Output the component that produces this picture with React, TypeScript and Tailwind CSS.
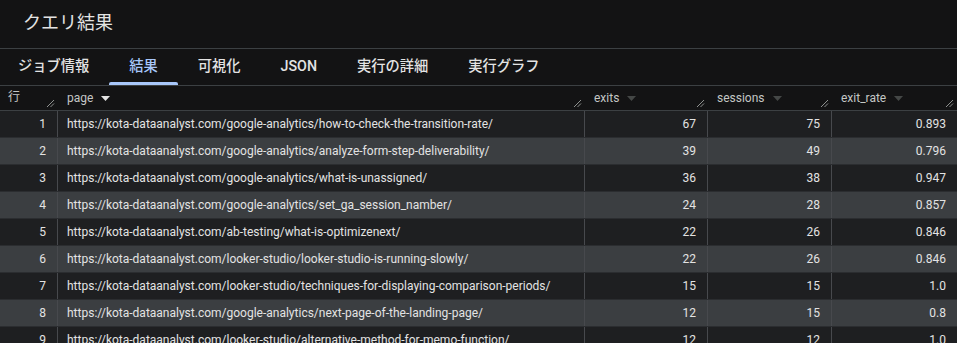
import React from "react";

const rows: [number, string, number, number, string][] = [
  [1, "https://kota-dataanalyst.com/google-analytics/how-to-check-the-transition-rate/", 67, 75, "0.893"],
  [2, "https://kota-dataanalyst.com/google-analytics/analyze-form-step-deliverability/", 39, 49, "0.796"],
  [3, "https://kota-dataanalyst.com/google-analytics/what-is-unassigned/", 36, 38, "0.947"],
  [4, "https://kota-dataanalyst.com/google-analytics/set_ga_session_namber/", 24, 28, "0.857"],
  [5, "https://kota-dataanalyst.com/ab-testing/what-is-optimizenext/", 22, 26, "0.846"],
  [6, "https://kota-dataanalyst.com/looker-studio/looker-studio-is-running-slowly/", 22, 26, "0.846"],
  [7, "https://kota-dataanalyst.com/looker-studio/techniques-for-displaying-comparison-periods/", 15, 15, "1.0"],
  [8, "https://kota-dataanalyst.com/google-analytics/next-page-of-the-landing-page/", 12, 15, "0.8"],
  [9, "https://kota-dataanalyst.com/looker-studio/alternative-method-for-memo-function/", 12, 12, "1.0"],
];

const tabs = ["ジョブ情報", "結果", "可視化", "JSON", "実行の詳細", "実行グラフ"];

function Handle() {
  return (
    <svg width="9" height="9" viewBox="0 0 9 9" className="absolute right-[3px] bottom-[2px]">
      <line x1="1" y1="8" x2="8" y2="1" stroke="#8e918f" strokeWidth="1" />
      <line x1="4.5" y1="8" x2="8" y2="4.5" stroke="#8e918f" strokeWidth="1" />
    </svg>
  );
}

function Arrow({ bright }: { bright?: boolean }) {
  return (
    <svg width="9" height="5" viewBox="0 0 9 5" className="ml-[8px] mt-[1px]">
      <path d="M0 0 L9 0 L4.5 5 Z" fill={bright ? "#e3e3e3" : "#444746"} />
    </svg>
  );
}

export default function App() {
  const font = { fontFamily: "Roboto, 'Noto Sans CJK JP', sans-serif" };
  return (
    <div className="w-[957px] h-[343px] overflow-hidden bg-[#131314] text-[#e3e3e3]" style={font}>
      <div className="h-[49px] border-b border-[#3c4043] flex items-center pl-[23px] pb-[5px]">
        <span className="text-[18px] text-[#e3e3e3]" style={{ fontFamily: "'Noto Sans CJK JP', Roboto, sans-serif" }}>クエリ結果</span>
      </div>
      <div className="h-[37px] border-b border-[#3c4043] flex ml-[-2px]">
        {tabs.map((t, i) => (
          <div
            key={t}
            className={
              "relative h-full flex items-center px-[20px] text-[14.25px] font-medium " +
              (i === 1 ? "text-[#a8c7fa]" : "text-[#e3e3e3]")
            }
            style={{ fontFamily: "Roboto, 'Noto Sans CJK JP', sans-serif" }}
          >
            {t}
            {i === 1 && <div className="absolute left-0 right-0 bottom-0 h-[3px] bg-[#a8c7fa] rounded-t-[2px]" />}
          </div>
        ))}
      </div>
      <div className="grid grid-cols-[58px_527px_123px_124px_125px] h-[25px] border-b border-[#3c4043] text-[12px] text-[#c4c7c5]">
        <div className="relative flex items-center pl-[8px] pb-[2px]">行<Handle /></div>
        <div className="relative flex items-center pl-[9px]">page<Arrow bright /><Handle /></div>
        <div className="relative flex items-center pl-[9px]">exits<Arrow /><Handle /></div>
        <div className="relative flex items-center pl-[9px]">sessions<Arrow /><Handle /></div>
        <div className="relative flex items-center pl-[9px]">exit_rate<Arrow /><Handle /></div>
      </div>
      {rows.map((r, i) => (
        <div
          key={r[0]}
          className={
            "grid grid-cols-[58px_527px_123px_124px_125px] h-[27px] text-[12px] text-[#e3e3e3] border-b border-[#2b2d30] " +
            (i % 2 === 0 ? "bg-[#1e1f21]" : "bg-[#3b3e41]")
          }
        >
          <div className="flex items-center justify-end pr-[11px] border-r border-[#47494d]">{r[0]}</div>
          <div className="flex items-center pl-[9px] border-r border-[#47494d] whitespace-nowrap overflow-hidden">{r[1]}</div>
          <div className="flex items-center justify-end pr-[11px] border-r border-[#47494d]">{r[2]}</div>
          <div className="flex items-center justify-end pr-[11px] border-r border-[#47494d]">{r[3]}</div>
          <div className="flex items-center justify-end pr-[11px]">{r[4]}</div>
        </div>
      ))}
    </div>
  );
}
